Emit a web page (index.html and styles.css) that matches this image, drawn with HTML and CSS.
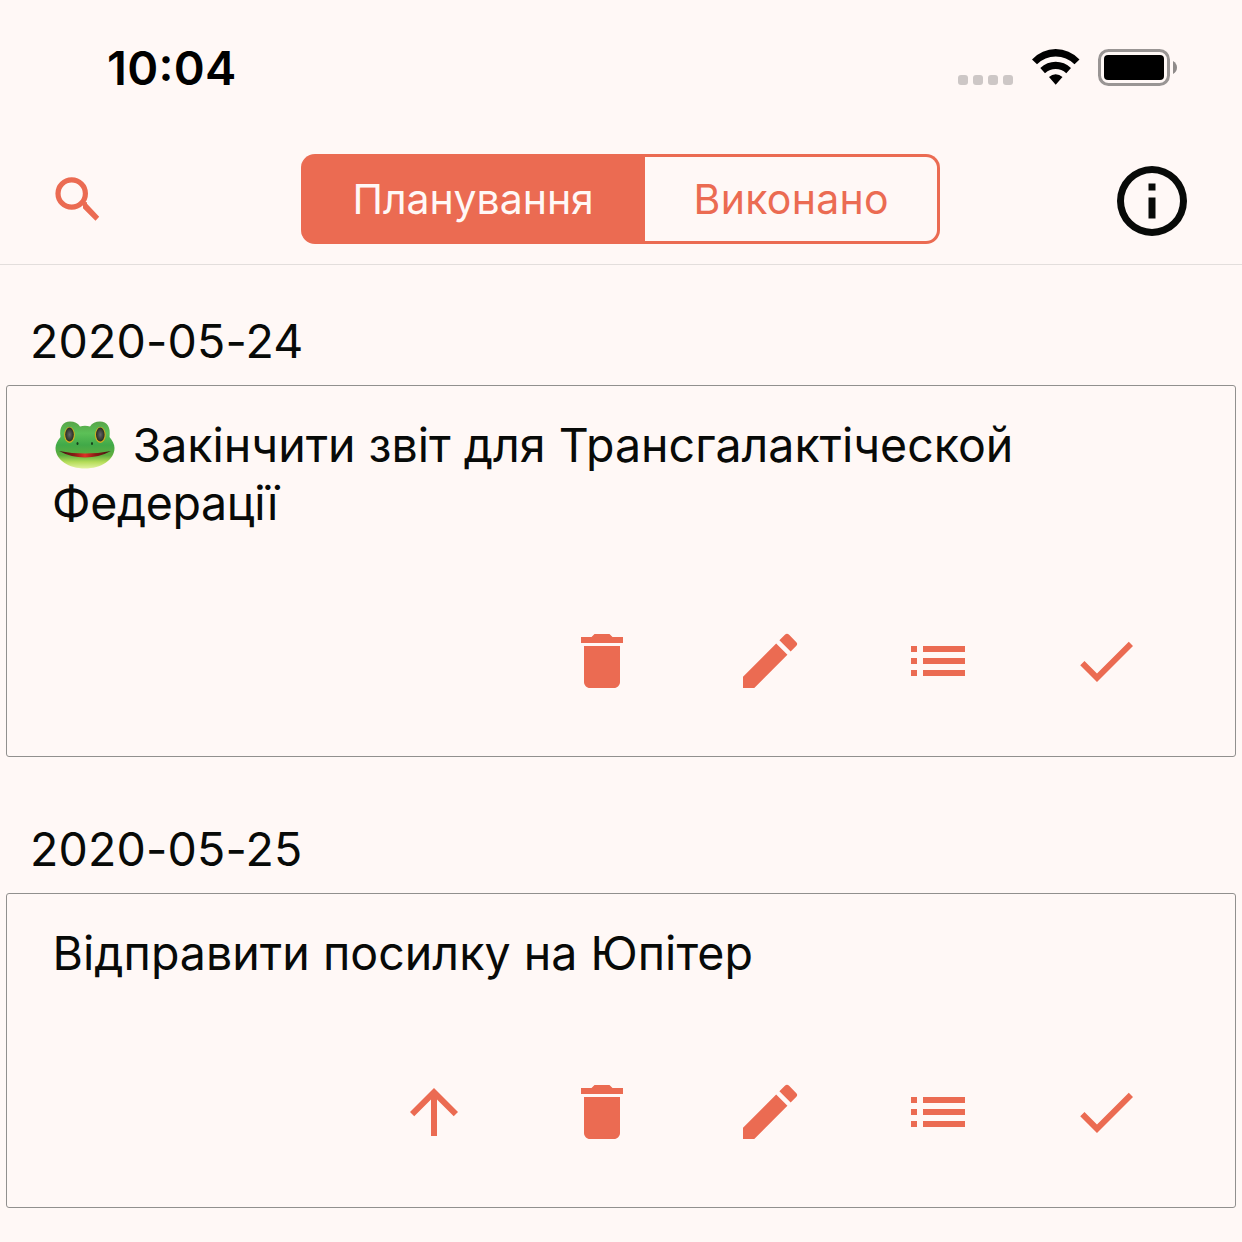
FILE: index.html
```html
<!DOCTYPE html>
<html lang="uk">
<head>
<meta charset="utf-8">
<title>Планування</title>
<link rel="stylesheet" href="styles.css">
</head>
<body>
<svg class="sprite" aria-hidden="true">
  <symbol id="trash" viewBox="0 0 24 24"><path d="M6 19c0 1.100.9 2 2 2h8c1.100 0 2-.9 2-2V7H6v12zM19 4h-3.500l-1-1h-5l-1 1H5v2h14V4z"/></symbol>
  <symbol id="pencil" viewBox="0 0 24 24"><path d="M3 17.250V21h3.750L17.810 9.940l-3.750-3.750L3 17.250zM20.710 7.040a1 1 0 0 0 0-1.410l-2.340-2.340a1 1 0 0 0-1.410 0l-1.830 1.830 3.750 3.750 1.830-1.830z"/></symbol>
  <symbol id="list" viewBox="0 0 24 24"><path d="M3 13h2v-2H3v2zm0 4h2v-2H3v2zm0-8h2V7H3v2zm4 4h14v-2H7v2zm0 4h14v-2H7v2zM7 7v2h14V7H7z"/></symbol>
  <symbol id="check" viewBox="0 0 24 24"><path d="M9 16.170L4.830 12l-1.420 1.410L9 19 21 7l-1.410-1.410z"/></symbol>
  <symbol id="up" viewBox="0 0 24 24"><path d="M4 12l1.410 1.410L11 7.830V20h2V7.830l5.580 5.590L20 12l-8-8-8 8z"/></symbol>
</svg>

<div class="status">
  <span class="time">10<span class="colon">:</span>04</span>
  <div class="indicators">
    <svg class="dots" viewBox="0 0 55 10"><rect width="10" height="10" rx="3"/><rect x="15" width="10" height="10" rx="3"/><rect x="30" width="10" height="10" rx="3"/><rect x="45" width="10" height="10" rx="3"/></svg>
    <svg class="wifi" viewBox="0 0 48 36"><path d="M0 10.500Q10 0 23.700 0T47.500 10.500L42.500 15.300Q34.500 7.500 23.700 7.500T5 15.300zM8.300 19Q15 12.800 23.700 12.800T39 19L34.300 24.200Q29.500 20 23.700 20T13 24.200zM17 28Q20 25.300 23.700 25.300T30.500 28L23.700 35.700z"/></svg>
    <svg class="battery" viewBox="0 0 80 38"><rect x="1.500" y="1.500" width="69" height="34" rx="9" fill="none" stroke="#999594" stroke-width="3"/><rect x="6" y="6" width="60" height="25" rx="4"/><path d="M75 12Q79 14.500 79 18.500T75 25z" fill="#8f8b8a"/></svg>
  </div>
</div>

<header class="header">
  <svg class="search" viewBox="0 0 48 48"><circle cx="17.700" cy="17.500" r="13.700" fill="none" stroke="#eb6b52" stroke-width="5.200"/><path d="M27.500 25.500L29 25 33 25.500 33 27 45.200 40 41.500 44 29 31.500V29z" transform="translate(0 .7)"/></svg>
  <nav class="segments">
    <div class="segment active"><span class="plan">Планування</span></div>
    <div class="segment"><span class="done">Виконано</span></div>
  </nav>
  <svg class="info" viewBox="0 0 24 24"><path d="M11 17h2v-6h-2v6zm1-15a10 10 0 1 0 0 20 10 10 0 0 0 0-20zm0 18a8 8 0 1 1 0-16 8 8 0 0 1 0 16zM11 9h2V7h-2v2z"/></svg>
</header>

<main>
  <h2 class="date">2020-05-24</h2>
  <section class="card">
    <p class="task"><svg class="frog" viewBox="0 0 62 50">
      <defs>
        <linearGradient id="skin" x1="0" y1="0" x2="0" y2="1"><stop offset="0" stop-color="#57a548"/><stop offset=".25" stop-color="#5cc057"/><stop offset=".5" stop-color="#41a948"/><stop offset=".72" stop-color="#5fae3f"/><stop offset=".86" stop-color="#b4dc58"/><stop offset="1" stop-color="#e2f3a0"/></linearGradient>
        <radialGradient id="pupil"><stop offset="0" stop-color="#666"/><stop offset="1" stop-color="#252b22"/></radialGradient>
        <linearGradient id="mouth"><stop offset="0" stop-color="#351512"/><stop offset=".3" stop-color="#8c1a14"/><stop offset=".5" stop-color="#e03025"/><stop offset=".7" stop-color="#8c1a14"/><stop offset="1" stop-color="#351512"/></linearGradient>
      </defs>
      <path fill="url(#skin)" d="M6.500 17C5 7 9 1.500 16 1.500c4.500 0 8 1.500 10 5q5-1.500 10 0c2-3.500 5.500-5 10-5 7 0 11 5.500 9.500 15.500 3 4 5 7 5 11C60.500 40 47 48.500 31 48.500S1.500 40 1.500 28c0-4 2-7 5-11z"/>
      <path fill="url(#mouth)" d="M5 31Q18 33.500 31 33.500T57 31Q45 37.500 31 37.500T5 31z"/>
      <ellipse cx="15.500" cy="15" rx="5.400" ry="7.900" fill="#d1ae20"/><ellipse cx="46.300" cy="15" rx="5.400" ry="7.900" fill="#d1ae20"/>
      <ellipse cx="15.500" cy="14.600" rx="4.300" ry="7" fill="url(#pupil)"/><ellipse cx="46.300" cy="14.600" rx="4.300" ry="7" fill="url(#pupil)"/>
      <ellipse cx="23.500" cy="23.500" rx="1" ry="1.500" fill="#173d1b"/><ellipse cx="38" cy="23.500" rx="1" ry="1.500" fill="#173d1b"/>
    </svg><span class="t1">Закінчити звіт для Трансгалактіческой</span><br><span class="t2">Федерації</span></p>
    <div class="actions">
      <svg><use href="#trash"/></svg><svg><use href="#pencil"/></svg><svg><use href="#list"/></svg><svg><use href="#check"/></svg>
    </div>
  </section>
  <h2 class="date">2020-05-25</h2>
  <section class="card short">
    <p class="task"><span class="t3">Відправити посилку на Юпітер</span></p>
    <div class="actions">
      <svg><use href="#up"/></svg><svg><use href="#trash"/></svg><svg><use href="#pencil"/></svg><svg><use href="#list"/></svg><svg><use href="#check"/></svg>
    </div>
  </section>
</main>
</body>
</html>
```
FILE: styles.css
```css
* { box-sizing: border-box; }
body {
  margin: 0;
  height: 1242px;
  overflow: hidden;
  background: #fff8f6;
  color: #080a08;
  font-family: Inter, "Liberation Sans", sans-serif;
  font-size: 46.5px;
}
svg { display: block; flex: none; }
.sprite { display: none; }
.status {
  display: flex;
  justify-content: space-between;
  height: 132px;
  padding: 40px 64px 0 107px;
  color: #000;
}
.time { font-size: 47px; font-weight: 600; line-height: 56px; letter-spacing: 0.3px; }
.colon { position: relative; top: -4px; }
.indicators { display: flex; align-items: flex-start; }
.dots { width: 55px; height: 10px; margin: 35px 19px 0 0; fill: #cdc7c6; }
.wifi { width: 48px; height: 36px; margin: 9px 18px 0 0; }
.battery { width: 80px; height: 38px; margin-top: 9px; }
.header {
  display: flex;
  justify-content: space-between;
  align-items: flex-start;
  height: 133px;
  padding: 22px 48px 0 54px;
  border-bottom: 1px solid #e3dedc;
}
.search { width: 48px; height: 48px; margin: 22px 199px 0 0; fill: #eb6b52; }
.segments {
  display: flex;
  width: 639px;
  height: 90px;
  font-size: 41px;
  line-height: 84px;
  color: #eb6b52;
  white-space: nowrap;
}
.segment {
  flex: 1;
  padding-left: 48.5px;
  border: 3px solid #eb6b52;
  border-left: 0;
  border-radius: 0 14px 14px 0;
}
.segment.active {
  flex: 0 0 344px;
  padding-left: 51.5px;
  border-radius: 14px 0 0 14px;
  background: #eb6b52;
  color: #fff8f6;
}
.plan { letter-spacing: -0.05px; }
.done { letter-spacing: 0.3px; }
.info { width: 84px; height: 84px; margin: 5px 0 0 auto; fill: #080a08; }
.date {
  margin: 0;
  padding: 48px 0 0 30px;
  height: 120px;
  font-size: 46.5px;
  font-weight: 400;
  line-height: 56px;
  letter-spacing: 0.15px;
}
.card {
  height: 372px;
  margin: 0 6px 16px;
  border: 1px solid #91908e;
  border-radius: 3px;
  padding: 30px 93px 59px 46px;
  display: flex;
  flex-direction: column;
  justify-content: space-between;
}
.card.short { height: 315px; }
.task { margin: 0; line-height: 58px; white-space: nowrap; }
.t2 { margin-left: -1px; letter-spacing: -0.35px; }
.t3 { margin-left: -0.5px; letter-spacing: 0.04px; }
.frog { display: inline-block; width: 62px; height: 50px; margin: 0 16.5px 0 1px; vertical-align: -8px; }
.actions { display: flex; justify-content: flex-end; gap: 96px; }
.actions svg { width: 72px; height: 72px; fill: #eb6b52; }
```
